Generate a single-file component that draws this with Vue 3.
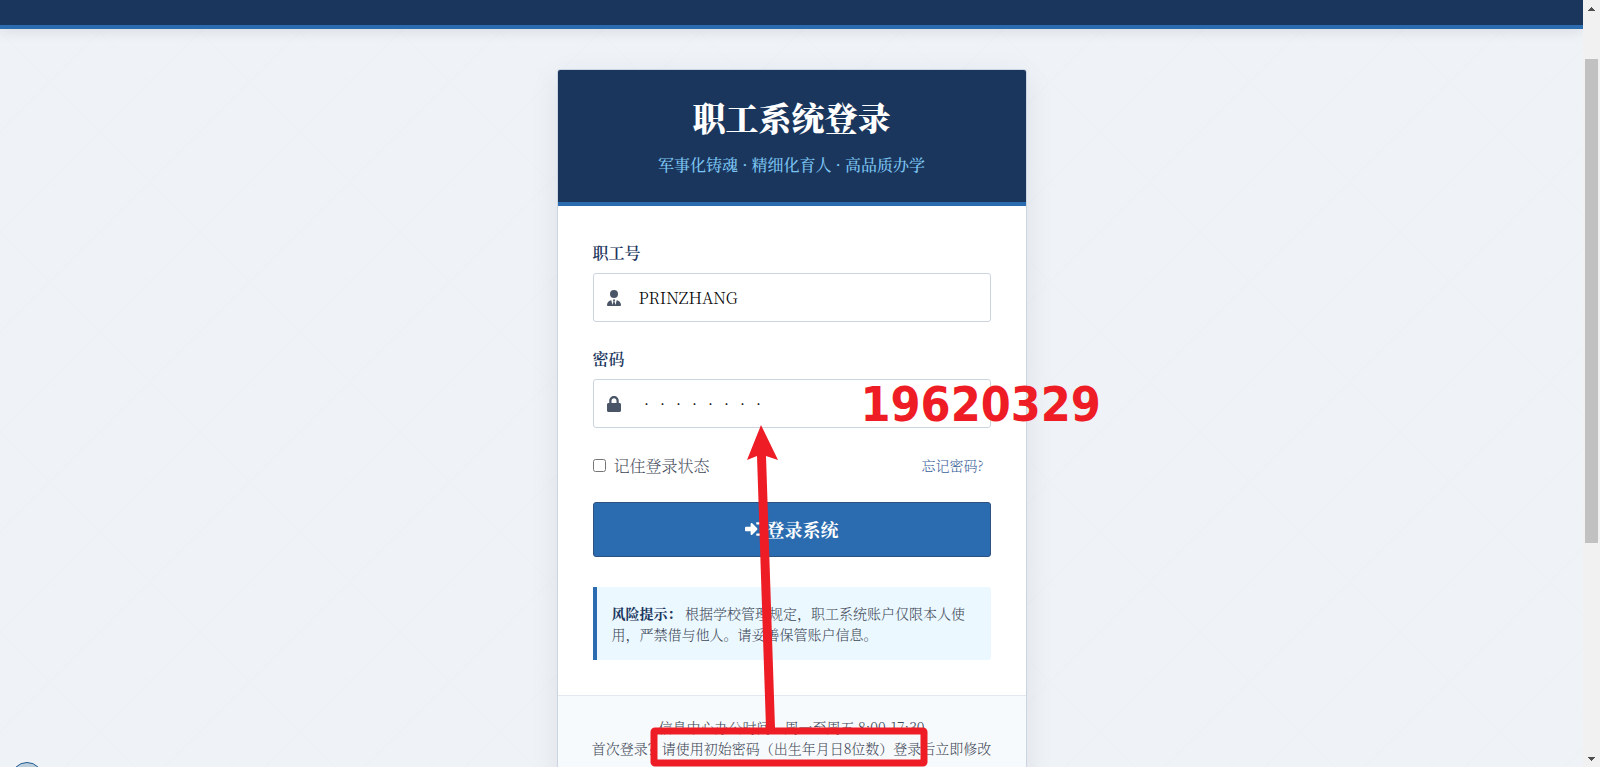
<script setup>
import { ref } from 'vue'

const account = ref('PRINZHANG')
const password = ref('19620329')
const remember = ref(false)
</script>

<template>
  <div class="screen">
    <div class="page">
      <header class="topbar"></header>
      <main class="stage">
        <section class="card">
          <div class="card-head">
            <h1>职工系统登录</h1>
            <p>军事化铸魂 · 精细化育人 · 高品质办学</p>
          </div>
          <form class="card-body" @submit.prevent>
            <div class="field">
              <label for="account">职工号</label>
              <div class="control">
                <svg class="field-icon" viewBox="0 0 448 512" aria-hidden="true"><path d="M96 128a128 128 0 1 0 256 0A128 128 0 1 0 96 128zm94.500 200.200l18.600 31L175.800 483.100l-36-146.900c-2-8.100-9.800-13.400-17.900-11.300C51.900 342.400 0 405.800 0 481.300c0 17 13.800 30.700 30.700 30.700H417.300c17 0 30.700-13.800 30.700-30.700c0-75.500-51.900-138.900-121.900-156.400c-8.100-2-15.900 3.300-17.900 11.300l-36 146.900L238.900 359.200l18.600-31c6.400-10.700-1.300-24.200-13.700-24.200H204.300c-12.400 0-20.100 13.600-13.700 24.200z" /></svg>
                <input id="account" v-model="account" type="text" autocomplete="off" />
              </div>
            </div>
            <div class="field">
              <label for="password">密码</label>
              <div class="control">
                <svg class="field-icon" viewBox="0 0 448 512" aria-hidden="true"><path d="M400 224h-24v-72C376 68.200 307.800 0 224 0S72 68.200 72 152v72H48c-26.500 0-48 21.500-48 48v192c0 26.500 21.500 48 48 48h352c26.500 0 48-21.500 48-48V272c0-26.500-21.500-48-48-48zm-96 0H144v-72c0-44 36-80 80-80s80 36 80 80v72z" /></svg>
                <input id="password" v-model="password" type="password" autocomplete="off" />
              </div>
            </div>
            <div class="options">
              <label class="remember"><input v-model="remember" type="checkbox" />记住登录状态</label>
              <a href="#">忘记密码?</a>
            </div>
            <button class="submit" type="submit">
              <svg viewBox="0 0 512 512" aria-hidden="true"><path d="M416 448h-84c-6.600 0-12-5.400-12-12v-40c0-6.600 5.400-12 12-12h84c17.700 0 32-14.300 32-32V160c0-17.700-14.300-32-32-32h-84c-6.600 0-12-5.400-12-12V76c0-6.600 5.400-12 12-12h84c53 0 96 43 96 96v192c0 53-43 96-96 96zM340 228L206 94c-18-18-46-5-46 22v76H32c-18 0-32 14-32 32v64c0 18 14 32 32 32h128v76c0 27 28 40 46 22l134-134c16-16 16-40 0-56z" /></svg>
              <span>登录系统</span>
            </button>
            <p class="notice"><strong>风险提示：</strong> 根据学校管理规定，职工系统账户仅限本人使用，严禁借与他人。请妥善保管账户信息。</p>
          </form>
          <footer class="card-foot">
            <p>信息中心办公时间：周一至周五 8:00-17:30</p>
            <p>首次登录？请使用初始密码（出生年月日8位数）登录后立即修改</p>
          </footer>
          <div class="annotation">
            <span class="digits">19620329</span>
            <svg viewBox="0 0 470 700" aria-hidden="true">
              <path d="M204 356L221 391L209 387L218 659H209L200 387L190 391Z" />
              <rect x="97" y="662" width="270" height="32" rx="1" />
            </svg>
          </div>
        </section>
      </main>
      <div class="orb"></div>
    </div>
    <div class="scrollbar" aria-hidden="true">
      <svg viewBox="0 0 17 17"><path d="M5 11v-1h1v-1h1v-1h1v-1h1v1h1v1h1v1h1v1z" /></svg>
      <div class="track"><div class="thumb"></div></div>
      <svg viewBox="0 0 17 17"><path d="M5 7h7v1h-1v1h-1v1h-1v1h-1v-1h-1v-1h-1v-1h-1z" /></svg>
    </div>
  </div>
</template>

<style>
body {
  margin: 0;
  overflow: hidden;
}
</style>

<style scoped>
.screen {
  display: flex;
  height: 100vh;
  overflow: hidden;
  font-family: "Noto Serif CJK SC", "Noto Sans CJK SC", serif;
  font-size: 16px;
  font-weight: 300;
  color: #3f4857;
}
.page {
  position: relative;
  flex: 1;
  overflow: hidden;
  background-color: #eff3f8;
  background-image:
    linear-gradient(45deg, transparent 49%, #edf1f6 50%, transparent 51%),
    linear-gradient(-45deg, transparent 49%, #edf1f6 50%, transparent 51%);
  background-size: 100px 100px;
  background-position: 0 32px;
}
.topbar {
  height: 25px;
  background: #1a365d;
  border-bottom: 4px solid #2b6cb0;
  box-shadow: 0 4px 12px rgba(0, 0, 0, 0.08);
}
.stage {
  display: flex;
  justify-content: center;
  padding: 40px 20px;
}
.card {
  position: relative;
  box-sizing: border-box;
  width: 100%;
  max-width: 470px;
  background: #fff;
  border: 1px solid #cbd5e0;
  border-radius: 3px;
  box-shadow: 0 8px 30px rgba(0, 0, 0, 0.08);
}
.card-head {
  padding: 29px 30px 25px;
  text-align: center;
  background: #1a365d;
  border-bottom: 4px solid #2b6cb0;
  border-radius: 2px 2px 0 0;
}
.card-head h1 {
  margin: 0 0 18px;
  font-size: 33px;
  line-height: 36px;
  font-weight: 900;
  color: #fff;
}
.card-head p {
  margin: 0;
  line-height: 24px;
  font-weight: 500;
  color: #7cc4f2;
}
.card-body {
  padding: 35px;
}
.field {
  margin-bottom: 25px;
}
.field label {
  display: block;
  margin-bottom: 8px;
  line-height: 24px;
  font-weight: 600;
  color: #1a365d;
}
.control {
  display: flex;
  align-items: center;
  box-sizing: border-box;
  height: 49px;
  padding-left: 12px;
  border: 1px solid #cbd5e0;
  border-radius: 3px;
}
.field-icon {
  flex: none;
  width: 16px;
  height: 16px;
  fill: #4a5568;
}
.control input {
  flex: 1;
  min-width: 0;
  padding: 0 17px;
  font: inherit;
  line-height: 24px;
  color: #000;
  background: none;
  border: 0;
  outline: 0;
}
.options {
  display: flex;
  align-items: center;
  justify-content: space-between;
  height: 24px;
  margin-bottom: 25px;
}
.remember {
  display: flex;
  align-items: center;
  gap: 8px;
}
.remember input {
  width: 13px;
  height: 13px;
  margin: 0;
}
.options a {
  padding-right: 7px;
  font-size: 14px;
  color: #3a5f9a;
  text-decoration: none;
}
.submit {
  display: flex;
  align-items: center;
  justify-content: center;
  gap: 4px;
  width: 100%;
  height: 55px;
  padding: 0 0 1px;
  font: inherit;
  font-size: 18px;
  font-weight: 700;
  color: #fff;
  background: #2b6cb0;
  border: 1px solid #2c5282;
  border-radius: 3px;
}
.submit svg {
  width: 18px;
  height: 18px;
  fill: #fff;
}
.notice {
  margin: 30px 0 0;
  padding: 16px 15px 15px;
  font-size: 14px;
  line-height: 21px;
  background: #ebf8ff;
  border-left: 4px solid #2b6cb0;
  border-radius: 0 3px 3px 0;
}
.notice strong {
  font-weight: 700;
  color: #1a365d;
}
.card-foot {
  padding: 21px 20px 30px;
  font-size: 14px;
  line-height: 21px;
  text-align: center;
  white-space: nowrap;
  background: #f7fafc;
  border-top: 1px solid #e2e8f0;
}
.card-foot p {
  margin: 0;
}
.annotation {
  position: absolute;
  inset: -1px 0 auto -1px;
  pointer-events: none;
}
.annotation svg {
  display: block;
  width: 470px;
  height: 700px;
}
.annotation path {
  fill: #ee1c25;
}
.annotation rect {
  fill: none;
  stroke: #ee1c25;
  stroke-width: 7px;
}
.digits {
  position: absolute;
  top: 307px;
  left: 304px;
  font-family: "DejaVu Sans Condensed", "DejaVu Sans", sans-serif;
  font-size: 48px;
  line-height: 56px;
  font-weight: 700;
  color: #ee1c25;
}
.orb {
  position: absolute;
  left: 11px;
  bottom: -27px;
  box-sizing: border-box;
  width: 32px;
  height: 32px;
  background: #bccddc;
  border: 1px solid #1d5a8e;
  border-radius: 50%;
}
.scrollbar {
  display: flex;
  flex-direction: column;
  width: 17px;
  background: #f1f1f1;
}
.scrollbar svg {
  width: 17px;
  height: 17px;
  fill: #505050;
}
.track {
  flex: 1;
  padding: 42px 2px 0;
}
.thumb {
  height: 70%;
  background: #c1c1c1;
}
</style>
